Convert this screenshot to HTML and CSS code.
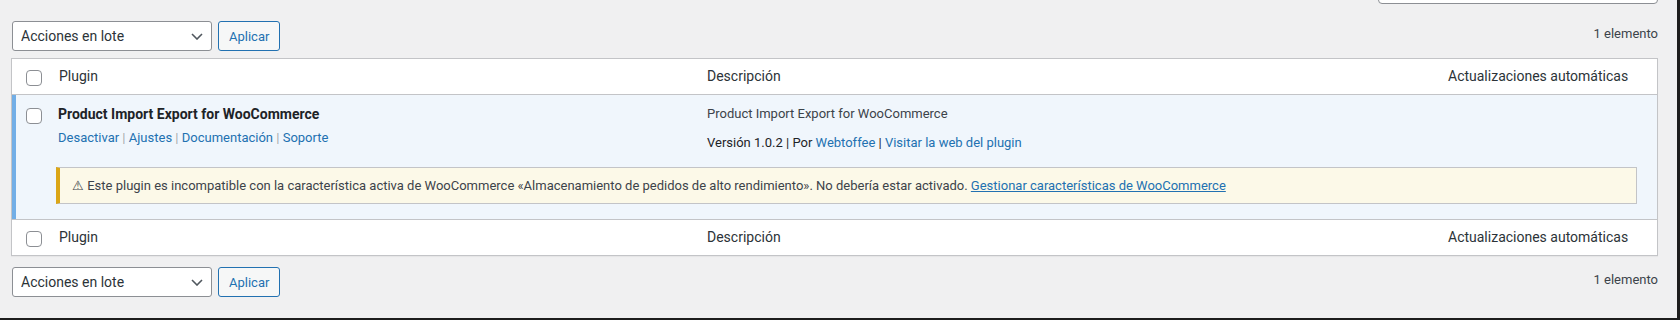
FILE: index.html
```html
<!DOCTYPE html>
<html lang="es">
<head>
    <meta charset="UTF-8">
    <meta name="viewport" content="width=device-width, initial-scale=1.0">
    <title>Plugins</title>
    <link rel="stylesheet" href="styles.css">
</head>
<body>
    <div class="wrap">
        <div class="search-row">
            <input type="search" class="search-box" aria-label="Buscar plugins instalados">
        </div>

        <div class="tablenav top">
            <div class="select-wrap">
                <select class="bulk-select">
                    <option>Acciones en lote</option>
                </select>
                <svg class="select-arrow" width="12" height="7" viewBox="0 0 12 7"><path d="M1 1l5 5 5-5" fill="none" stroke="#50575e" stroke-width="1.6"/></svg>
            </div>
            <button class="button">Aplicar</button>
            <span class="count">1 elemento</span>
        </div>

        <table class="plugins">
            <colgroup>
                <col class="col-check">
                <col class="col-name">
                <col class="col-desc">
                <col>
            </colgroup>
            <thead>
                <tr>
                    <td class="check-column"><input type="checkbox" class="cb"></td>
                    <th>Plugin</th>
                    <th>Descripción</th>
                    <th>Actualizaciones automáticas</th>
                </tr>
            </thead>
            <tbody>
                <tr class="active">
                    <th class="check-column"><input type="checkbox" class="cb"></th>
                    <td class="plugin-title">
                        <strong>Product Import Export for WooCommerce</strong>
                        <div class="row-actions">
                            <a href="#">Desactivar</a> <span class="sep">|</span>
                            <a href="#">Ajustes</a> <span class="sep">|</span>
                            <a href="#">Documentación</a> <span class="sep">|</span>
                            <a href="#">Soporte</a>
                        </div>
                    </td>
                    <td class="column-description" colspan="2">
                        <p class="desc">Product Import Export for WooCommerce</p>
                        <p class="version">Versión 1.0.2 | Por <a href="#">Webtoffee</a> | <a href="#">Visitar la web del plugin</a></p>
                    </td>
                </tr>
                <tr class="active notice-row">
                    <td colspan="4">
                        <div class="notice">
                            <p>⚠ Este plugin es incompatible con la característica activa de WooCommerce «Almacenamiento de pedidos de alto rendimiento». No debería estar activado. <a href="#">Gestionar características de WooCommerce</a></p>
                        </div>
                    </td>
                </tr>
            </tbody>
            <tfoot>
                <tr>
                    <td class="check-column"><input type="checkbox" class="cb"></td>
                    <th>Plugin</th>
                    <th>Descripción</th>
                    <th>Actualizaciones automáticas</th>
                </tr>
            </tfoot>
        </table>

        <div class="tablenav bottom">
            <div class="select-wrap">
                <select class="bulk-select">
                    <option>Acciones en lote</option>
                </select>
                <svg class="select-arrow" width="12" height="7" viewBox="0 0 12 7"><path d="M1 1l5 5 5-5" fill="none" stroke="#50575e" stroke-width="1.6"/></svg>
            </div>
            <button class="button">Aplicar</button>
            <span class="count">1 elemento</span>
        </div>
    </div>
</body>
</html>
```

FILE: styles.css
```css
* { box-sizing: border-box; }
html, body { margin: 0; }
body {
    height: 320px;
    overflow: hidden;
    background: #f0f0f1;
    color: #3c434a;
    font-family: Roboto, "Liberation Sans", sans-serif;
    font-size: 13px;
    border-right: 3px solid #1d1d1d;
    border-bottom: 2px solid #1d1d1d;
}
a { color: #2271b1; text-decoration: none; }

.wrap { margin: 0 19px 0 11px; }

.search-row { height: 4px; display: flex; justify-content: flex-end; }
.search-box {
    width: 280px;
    height: 30px;
    margin-top: -26px;
    border: 1px solid #8c8f94;
    border-radius: 4px;
    background: #fff;
}

.tablenav { display: flex; align-items: flex-start; height: 30px; padding-left: 1px; }
.tablenav.top { margin: 17px 0 7px; }
.tablenav.bottom { margin-top: 11px; }
.select-wrap { position: relative; margin-right: 6px; }
.bulk-select {
    appearance: none;
    -webkit-appearance: none;
    width: 200px;
    height: 30px;
    margin: 0;
    padding: 0 24px 0 8px;
    border: 1px solid #8c8f94;
    border-radius: 3px;
    background: #fff;
    color: #2c3338;
    font-family: inherit;
    font-size: 14px;
}
.select-arrow { position: absolute; right: 9px; top: 12px; pointer-events: none; }
.button {
    height: 30px;
    padding: 0 10px;
    border: 1px solid #2271b1;
    border-radius: 3px;
    background: #f6f7f7;
    color: #2271b1;
    font-family: inherit;
    font-size: 13px;
}
.count { margin-left: auto; line-height: 26px; color: #3c434a; }

.plugins {
    width: 100%;
    table-layout: fixed;
    border-collapse: separate;
    border-spacing: 0;
    background: #fff;
    border: 1px solid #c3c4c7;
    box-shadow: 0 1px 1px rgba(0, 0, 0, .04);
}
.col-check { width: 37px; }
.col-name { width: 648px; }
.col-desc { width: 741px; }
.plugins td, .plugins th { vertical-align: top; text-align: left; font-weight: 400; }

.plugins thead th, .plugins tfoot th {
    padding: 8px 10px;
    font-size: 14px;
    line-height: 19px;
    color: #2c3338;
}
.plugins thead td, .plugins thead th { border-bottom: 1px solid #c3c4c7; }
.plugins tfoot td, .plugins tfoot th { border-top: 1px solid #c3c4c7; }
.check-column { padding: 11px 0 0 14px; }
.plugins tbody .check-column { padding-top: 13px; }
.cb {
    appearance: none;
    -webkit-appearance: none;
    display: block;
    width: 16px;
    height: 16px;
    margin: 0;
    border: 1px solid #8c8f94;
    border-radius: 4px;
    background: #fff;
}

.plugins tr.active td, .plugins tr.active th { background: #f0f6fc; }
.plugins tr.active > :first-child { box-shadow: inset 4px 0 0 #72aee6; }

.plugin-title { padding: 9px 10px 10px 9px; }
.plugin-title strong { display: block; font-size: 14px; line-height: 20px; font-weight: 700; color: #1d2327; }
.row-actions { margin-top: 5px; line-height: 18px; }
.row-actions .sep { color: #a7aaad; }

.column-description { padding: 9px 10px 9px; }
.column-description p { margin: 0; line-height: 20px; }
.desc { color: #3c434a; }
.version { margin-top: 9px !important; color: #1d2327; }

.notice-row td { padding: 0; }
.notice {
    margin: 5px 20px 15px 44px;
    background: #fcf9e8;
    border: 1px solid #c3c4c7;
    border-left: 4px solid #dba617;
    padding: 0 12px;
}
.notice p { margin: 0; padding: 8px 0; line-height: 19px; color: #3c434a; }
.notice a { text-decoration: underline; }
```
